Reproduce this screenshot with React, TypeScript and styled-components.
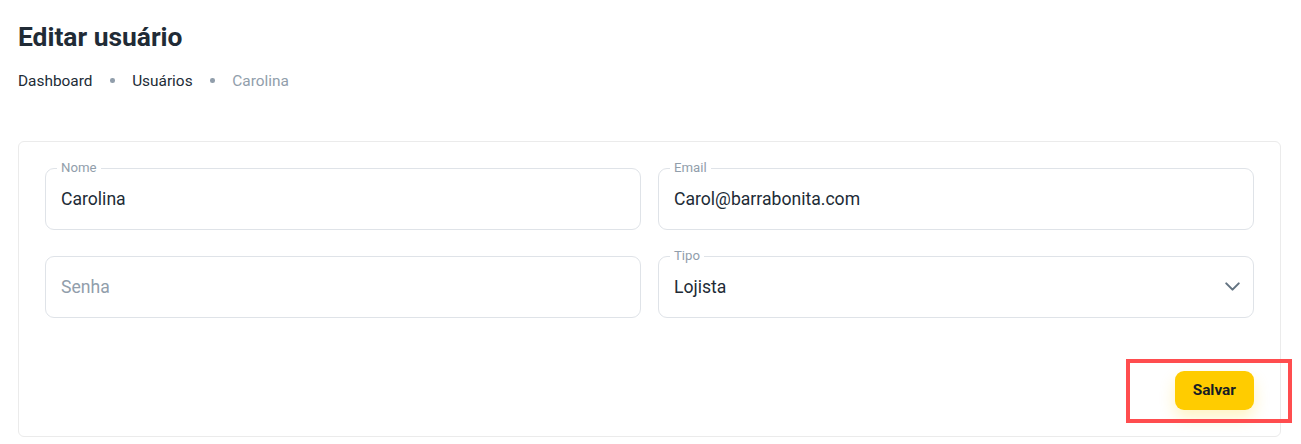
import React from 'react';
import styled, { createGlobalStyle } from 'styled-components';

const GlobalStyle = createGlobalStyle`
    * { box-sizing: border-box; }
    body {
        margin: 0;
        background: #fff;
        font-family: Roboto, "Liberation Sans", Arial, sans-serif;
        color: #212b36;
    }
`

const ChevronDown = () => (
    <svg width="25" height="25" viewBox="0 0 24 24" fill="none" stroke="#637381" strokeWidth="2" strokeLinecap="round" strokeLinejoin="round">
        <path d="M6 9l6 6 6-6" />
    </svg>
)

const App = () => {
    return (
        <StyledPage>
            <GlobalStyle />
            <StyledTitle>Editar usuário</StyledTitle>
            <StyledBreadcrumbs>
                <span>Dashboard</span>
                <StyledDot />
                <span>Usuários</span>
                <StyledDot />
                <span className="current">Carolina</span>
            </StyledBreadcrumbs>

            <StyledCard>
                <StyledGrid>
                    <StyledField>
                        <StyledLabel>Nome</StyledLabel>
                        <StyledValue>Carolina</StyledValue>
                    </StyledField>
                    <StyledField>
                        <StyledLabel>Email</StyledLabel>
                        <StyledValue>Carol@barrabonita.com</StyledValue>
                    </StyledField>
                    <StyledField>
                        <StyledValue $placeholder>Senha</StyledValue>
                    </StyledField>
                    <StyledField>
                        <StyledLabel>Tipo</StyledLabel>
                        <StyledValue>Lojista</StyledValue>
                        <StyledIcon><ChevronDown /></StyledIcon>
                    </StyledField>
                </StyledGrid>
                <StyledActions>
                    <StyledButton>Salvar</StyledButton>
                </StyledActions>
            </StyledCard>

            <StyledHighlight />
        </StyledPage>
    )
}

const StyledPage = styled.main`
    position: relative;
    padding: 18px 20px 7px 18px;
`

const StyledTitle = styled.h1`
    margin: 0;
    font-size: 26.4px;
    line-height: 39.6px;
    font-weight: 700;
    color: #212b36;
`

const StyledBreadcrumbs = styled.nav`
    display: flex;
    align-items: center;
    gap: 17.6px;
    margin-top: 11px;
    font-size: 15.4px;
    line-height: 24px;
    color: #212b36;
    .current {
        color: #919eab;
    }
`

const StyledDot = styled.span`
    width: 4.5px;
    height: 4.5px;
    border-radius: 50%;
    background: #919eab;
`

const StyledCard = styled.section`
    margin-top: 48px;
    background: #fff;
    border: 1px solid #ebebeb;
    border-radius: 6px;
    padding: 26px;
`

const StyledGrid = styled.div`
    display: grid;
    grid-template-columns: 1fr 1fr;
    column-gap: 17px;
    row-gap: 26px;
`

const StyledField = styled.div`
    position: relative;
    height: 62px;
    border: 1px solid #dfe3e8;
    border-radius: 9px;
    display: flex;
    align-items: center;
    padding: 0 8px 0 15px;
`

const StyledLabel = styled.label`
    position: absolute;
    top: -9px;
    left: 11px;
    padding: 0 4px;
    background: #fff;
    font-size: 13.2px;
    line-height: 16px;
    color: #919eab;
`

const StyledValue = styled.span<{ $placeholder?: boolean }>`
    flex: 1;
    font-size: 17.6px;
    color: ${p => p.$placeholder ? '#919eab' : '#212b36'};
`

const StyledIcon = styled.span`
    display: flex;
`

const StyledActions = styled.div`
    display: flex;
    justify-content: flex-end;
    margin-top: 53px;
`

const StyledButton = styled.button`
    height: 39px;
    padding: 0 18px;
    border: none;
    border-radius: 9px;
    background: #ffcc00;
    color: #161c24;
    font-family: Roboto, "Liberation Sans", Arial, sans-serif;
    font-size: 15.4px;
    font-weight: 700;
    box-shadow: 0 8px 16px rgba(255, 204, 0, 0.24);
    cursor: pointer;
`

const StyledHighlight = styled.div`
    position: absolute;
    left: 1126px;
    top: 359px;
    width: 166px;
    height: 64px;
    border: 4px solid #ff4d4f;
    pointer-events: none;
`

export default App
